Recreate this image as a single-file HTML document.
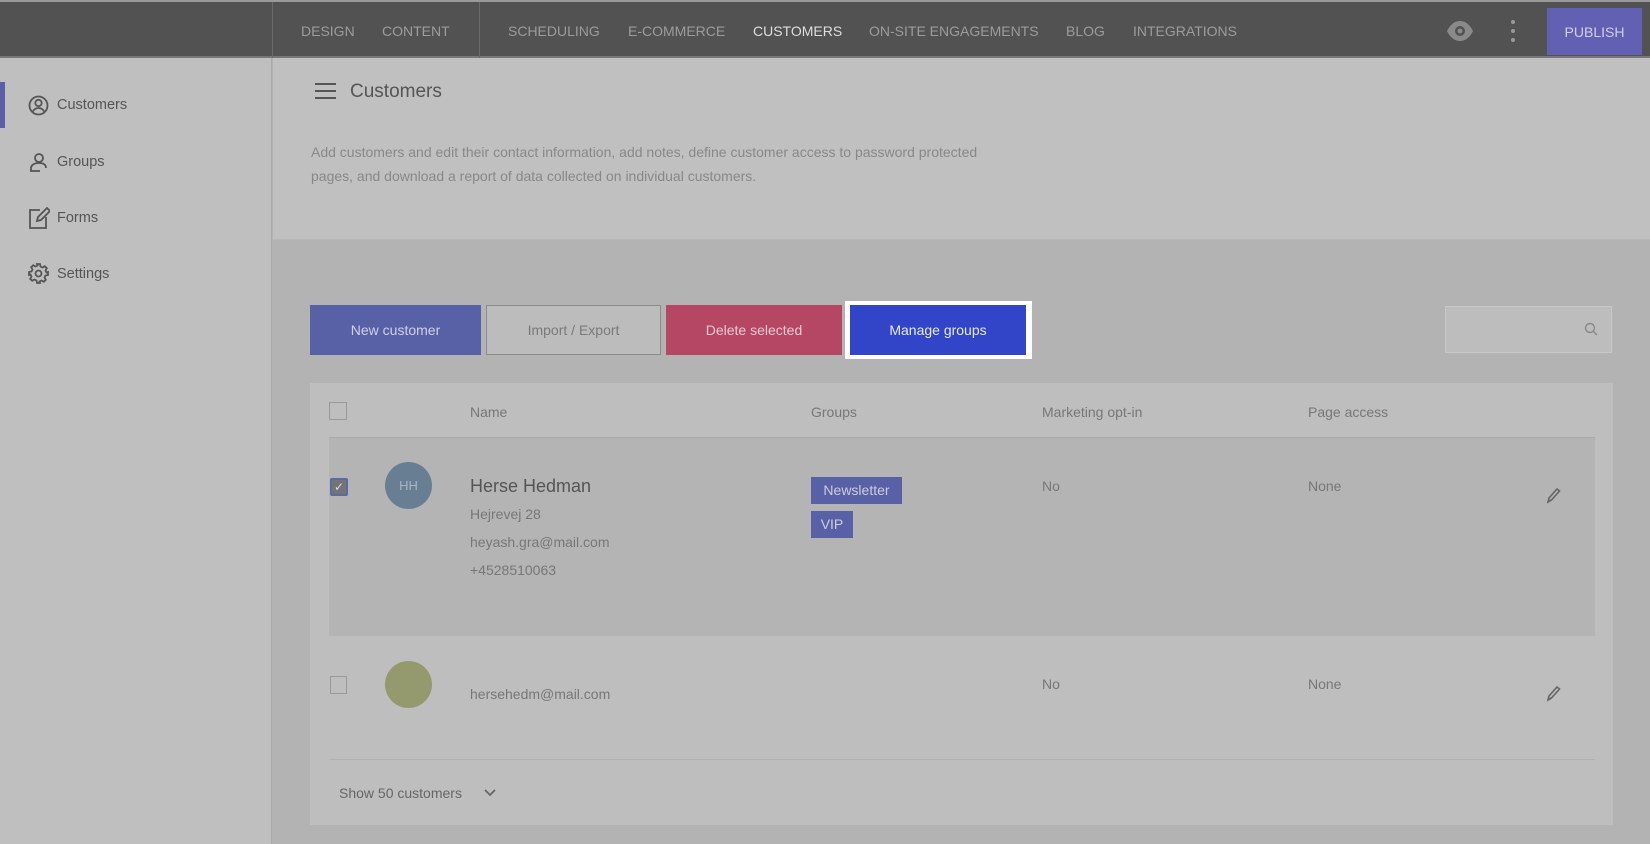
<!DOCTYPE html>
<html><head><meta charset="utf-8"><style>
*{box-sizing:border-box;margin:0;padding:0}
body{width:1650px;height:844px;overflow:hidden;background:#b3b3b3;font-family:"Liberation Sans",sans-serif;position:relative;color:#666}
.abs{position:absolute}
#top{left:0;top:0;width:1650px;height:58px;background:#525252;border-top:2px solid #9a9a9a;border-bottom:2px solid #777}
.nav{position:absolute;top:21px;font-size:14px;color:#9c9c9c;letter-spacing:0}
#side{left:0;top:58px;width:272px;height:786px;background:#bfbfbf;border-right:1px solid #aaa}
.si{position:absolute;left:57px;font-size:14.5px;color:#555}
#hdr{left:273px;top:58px;width:1377px;height:182px;background:#c0c0c0;border-bottom:1px solid #b8b8b8}
.btn{position:absolute;top:305px;height:50px;font-size:14px;text-align:center;line-height:50px}
.t{position:absolute;font-size:14px;color:#777}
</style></head><body>
<div id="top" class="abs">
 <div class="abs" style="left:272px;top:0;width:1px;height:56px;background:#6a6a6a"></div>
 <div class="abs" style="left:479px;top:0;width:1px;height:56px;background:#6a6a6a"></div>
 <span class="nav" style="left:301px">DESIGN</span>
 <span class="nav" style="left:382px">CONTENT</span>
 <span class="nav" style="left:508px">SCHEDULING</span>
 <span class="nav" style="left:628px">E-COMMERCE</span>
 <span class="nav" style="left:753px;color:#dedede">CUSTOMERS</span>
 <span class="nav" style="left:869px">ON-SITE ENGAGEMENTS</span>
 <span class="nav" style="left:1066px">BLOG</span>
 <span class="nav" style="left:1133px">INTEGRATIONS</span>
 <svg class="abs" style="left:1446px;top:17px" width="28" height="24" viewBox="0 0 28 24"><path d="M1 12C5 4 10 2 14 2s9 2 13 10c-4 8-9 10-13 10S5 20 1 12z" fill="#8a8a8a"/><circle cx="14" cy="12" r="5" fill="#525252"/><circle cx="14" cy="12" r="2.5" fill="#8a8a8a"/></svg>
 <div class="abs" style="left:1511px;top:18px;width:4px;height:4px;background:#999;border-radius:2px"></div>
 <div class="abs" style="left:1511px;top:27px;width:4px;height:4px;background:#999;border-radius:2px"></div>
 <div class="abs" style="left:1511px;top:36px;width:4px;height:4px;background:#999;border-radius:2px"></div>
 <div class="abs" style="left:1547px;top:6px;width:95px;height:47px;background:#6160b2;color:#d0d0ee;font-size:14px;text-align:center;line-height:48px">PUBLISH</div>
</div>
<div id="side" class="abs">
 <div class="abs" style="left:0;top:24px;width:5px;height:46px;background:#5a5fa8"></div>
 <svg class="abs" style="left:28px;top:37px" width="21" height="21" viewBox="0 0 21 21" fill="none" stroke="#555" stroke-width="1.8"><circle cx="10.5" cy="10.5" r="9"/><circle cx="10.5" cy="8" r="3.2"/><path d="M4.5 17c1.5-3 3.5-4 6-4s4.5 1 6 4"/></svg>
 <span class="si" style="top:39px">Customers</span>
 <svg class="abs" style="left:28px;top:94px" width="21" height="21" viewBox="0 0 21 21" fill="none" stroke="#555" stroke-width="1.8"><circle cx="11" cy="6" r="4"/><path d="M3 19v-3c0-2 2-5 8-5s7 3 7 5"/><path d="M2 19h10"/></svg>
 <span class="si" style="top:96px">Groups</span>
 <svg class="abs" style="left:28px;top:149px" width="22" height="22" viewBox="0 0 22 22" fill="none" stroke="#555" stroke-width="1.8"><path d="M12 3H2v18h16V10"/><path d="M9 14l1-4 9-9 3 3-9 9z"/></svg>
 <span class="si" style="top:152px">Forms</span>
 <svg class="abs" style="left:28px;top:205px" width="21" height="21" viewBox="0 0 21 21" fill="none" stroke="#555" stroke-width="1.8"><circle cx="10.5" cy="10.5" r="3"/><path d="M9 1h3l.5 2.5 2 1 2.3-1.3 2 2-1.3 2.3 1 2L20 9v3l-2.5.5-1 2 1.3 2.3-2 2-2.3-1.3-2 1L12 20H9l-.5-2.5-2-1-2.3 1.3-2-2 1.3-2.3-1-2L1 12V9l2.5-.5 1-2-1.3-2.3 2-2 2.3 1.3 2-1z"/></svg>
 <span class="si" style="top:208px">Settings</span>
</div>
<div id="hdr" class="abs">
 <div class="abs" style="left:42px;top:25px;width:21px;height:2px;background:#555;box-shadow:0 7px 0 #555,0 14px 0 #555"></div>
 <span class="abs" style="left:77px;top:23px;font-size:19px;color:#555">Customers</span>
 <div class="abs" style="left:38px;top:82px;font-size:14px;color:#888;line-height:24px;width:690px">Add customers and edit their contact information, add notes, define customer access to password protected pages, and download a report of data collected on individual customers.</div>
</div>
<div class="btn" style="left:310px;width:171px;background:#5861a6;color:#cfd1ea">New customer</div>
<div class="btn" style="left:486px;width:175px;border:1px solid #8c8c8c;background:#bcbcbc;color:#7a7a7a;line-height:48px">Import / Export</div>
<div class="btn" style="left:666px;width:176px;background:#b54764;color:#ecc9d2">Delete selected</div>
<div class="abs" style="left:845px;top:301px;width:187px;height:58px;background:#fff"></div>
<div class="btn" style="left:850px;width:176px;background:#3244c8;color:#e8eaff">Manage groups</div>
<div class="abs" style="left:1445px;top:306px;width:167px;height:47px;background:#bdbdbd;border:1px solid #c8c8c8"></div>
<svg class="abs" style="left:1584px;top:322px" width="14" height="14" viewBox="0 0 14 14" fill="none" stroke="#888" stroke-width="1.4"><circle cx="6" cy="6" r="4.5"/><path d="M9.5 9.5L13 13"/></svg>
<div class="abs" style="left:310px;top:383px;width:1303px;height:442px;background:#bebebe"></div>
<div class="abs" style="left:329px;top:402px;width:18px;height:18px;border:1.5px solid #999"></div>
<span class="t" style="left:470px;top:404px">Name</span>
<span class="t" style="left:811px;top:404px">Groups</span>
<span class="t" style="left:1042px;top:404px">Marketing opt-in</span>
<span class="t" style="left:1308px;top:404px">Page access</span>
<div class="abs" style="left:329px;top:437px;width:1266px;height:199px;background:#b4b4b4;border-top:1px solid #aaa"></div>
<div class="abs" style="left:330px;top:478px;width:18px;height:18px;background:#747474;border:2px solid #5a6aa8;border-radius:2px;color:#ddd;font-size:12px;line-height:14px;text-align:center">✓</div>
<div class="abs" style="left:385px;top:462px;width:47px;height:47px;border-radius:50%;background:#687f93;color:#a9b6c4;font-size:13px;text-align:center;line-height:47px">HH</div>
<span class="abs" style="left:470px;top:476px;font-size:18px;color:#555">Herse Hedman</span>
<span class="t" style="left:470px;top:506px">Hejrevej 28</span>
<span class="t" style="left:470px;top:534px">heyash.gra@mail.com</span>
<span class="t" style="left:470px;top:562px">+4528510063</span>
<div class="abs" style="left:811px;top:477px;width:91px;height:27px;background:#5861a6;color:#ccd;font-size:14px;line-height:27px;text-align:center">Newsletter</div>
<div class="abs" style="left:811px;top:511px;width:42px;height:27px;background:#5861a6;color:#ccd;font-size:14px;line-height:27px;text-align:center">VIP</div>
<span class="t" style="left:1042px;top:478px">No</span>
<span class="t" style="left:1308px;top:478px">None</span>
<svg class="abs" style="left:1545px;top:486px" width="16" height="18" viewBox="0 0 16 18" fill="none" stroke="#666" stroke-width="1.6"><path d="M3 16l1-4 8-9 2.5 2-8 9z"/><path d="M3 16l3-2"/></svg>
<div class="abs" style="left:330px;top:676px;width:17px;height:18px;border:1.5px solid #999"></div>
<div class="abs" style="left:385px;top:661px;width:47px;height:47px;border-radius:50%;background:#959a6e"></div>
<span class="t" style="left:470px;top:686px">hersehedm@mail.com</span>
<span class="t" style="left:1042px;top:676px">No</span>
<span class="t" style="left:1308px;top:676px">None</span>
<svg class="abs" style="left:1545px;top:684px" width="16" height="18" viewBox="0 0 16 18" fill="none" stroke="#666" stroke-width="1.6"><path d="M3 16l1-4 8-9 2.5 2-8 9z"/><path d="M3 16l3-2"/></svg>
<div class="abs" style="left:329px;top:759px;width:1266px;height:1px;background:#b2b2b2"></div>
<span class="t" style="left:339px;top:785px;color:#666">Show 50 customers</span>
<svg class="abs" style="left:484px;top:789px" width="12" height="8" viewBox="0 0 12 8" fill="none" stroke="#666" stroke-width="1.8"><path d="M1 1l5 5 5-5"/></svg>
</body></html>
